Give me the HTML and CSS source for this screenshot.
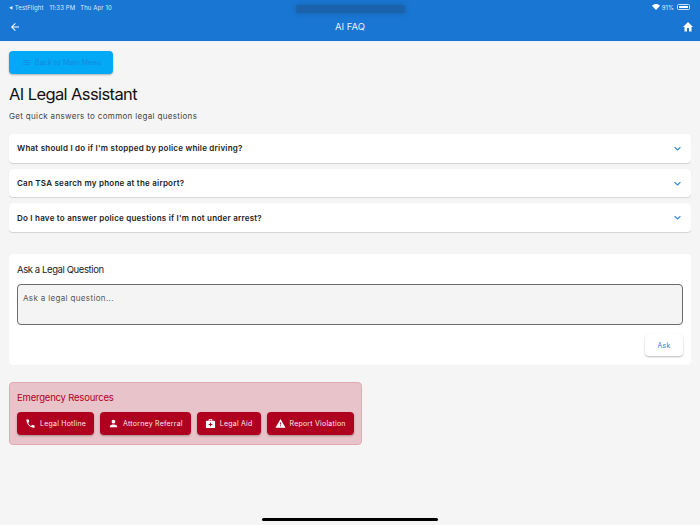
FILE: index.html
```html
<!DOCTYPE html>
<html lang="en">
<head>
<meta charset="utf-8">
<title>AI FAQ</title>
<link rel="stylesheet" href="styles.css">
</head>
<body>
<div class="app">
  <header class="appbar">
    <div class="status">
      <div class="status-left"><span class="tf-arrow">◀</span><span>TestFlight</span><span class="time">11:33 PM</span><span class="date">Thu Apr 10</span></div>
      <div class="status-right">
        <svg class="wifi" viewBox="0 0 16 12" width="8" height="6"><path fill="#fff" d="M8 12 0 3.600C4.500-1 11.500-1 16 3.600Z"/></svg>
        <span>91%</span>
        <span class="battery"><span class="battery-fill"></span></span>
      </div>
    </div>
    <div class="dynamic-pill"></div>
    <div class="nav">
      <svg class="nav-icon nav-icon-start" viewBox="0 0 24 24" width="12" height="12"><path fill="#fff" d="M20 11H7.800l5.600-5.600L12 4l-8 8 8 8 1.400-1.400L7.800 13H20z"/></svg>
      <div class="nav-title">AI FAQ</div>
      <svg class="nav-icon nav-icon-end" viewBox="0 0 24 24" width="12" height="12"><path fill="#fff" d="M10 21v-7h4v7h5v-9h3L12 2 2 12h3v9z"/></svg>
    </div>
  </header>
  <main class="content">
    <button class="back-btn">
      <svg viewBox="0 0 24 24" width="9" height="9"><path fill="#1a86e0" d="M3 18h18v-2H3zm0-5h18v-2H3zm0-7v2h18V6z"/></svg>
      <span>Back to Main Menu</span>
    </button>
    <h1 class="title">AI Legal Assistant</h1>
    <p class="subtitle">Get quick answers to common legal questions</p>
    <section class="faq">
      <div class="faq-item"><span>What should I do if I'm stopped by police while driving?</span><svg viewBox="0 0 12 8" width="7" height="5"><path fill="none" stroke="#2b85dc" stroke-width="2" d="m1 1.500 5 5 5-5"/></svg></div>
      <div class="faq-item"><span>Can TSA search my phone at the airport?</span><svg viewBox="0 0 12 8" width="7" height="5"><path fill="none" stroke="#2b85dc" stroke-width="2" d="m1 1.500 5 5 5-5"/></svg></div>
      <div class="faq-item"><span>Do I have to answer police questions if I'm not under arrest?</span><svg viewBox="0 0 12 8" width="7" height="5"><path fill="none" stroke="#2b85dc" stroke-width="2" d="m1 1.500 5 5 5-5"/></svg></div>
    </section>
    <section class="ask-card">
      <h2 class="ask-title">Ask a Legal Question</h2>
      <div class="ask-input">Ask a legal question...</div>
      <div class="ask-actions"><button class="ask-btn">Ask</button></div>
    </section>
    <section class="emergency">
      <h2 class="emergency-title">Emergency Resources</h2>
      <div class="emergency-row">
        <button class="em-btn"><svg viewBox="0 0 24 24" width="11" height="11"><path fill="#fff" d="M6.600 10.800c1.400 2.800 3.800 5.100 6.600 6.600l2.200-2.200c.3-.3.700-.4 1-.2 1.100.4 2.300.6 3.600.6.600 0 1 .4 1 1V20c0 .6-.4 1-1 1C10.600 21 3 13.400 3 4c0-.6.400-1 1-1h3.500c.6 0 1 .4 1 1 0 1.300.2 2.500.6 3.600.1.300 0 .7-.2 1z"/></svg><span>Legal Hotline</span></button>
        <button class="em-btn"><svg viewBox="0 0 24 24" width="11" height="11"><path fill="#fff" d="M12 12c2.200 0 4-1.800 4-4s-1.800-4-4-4-4 1.800-4 4 1.800 4 4 4m0 2c-2.700 0-8 1.300-8 4v2h16v-2c0-2.700-5.300-4-8-4"/></svg><span>Attorney Referral</span></button>
        <button class="em-btn"><svg viewBox="0 0 24 24" width="11" height="11"><path fill="#fff" d="M20 6h-4V4c0-1.100-.9-2-2-2h-4c-1.100 0-2 .9-2 2v2H4c-1.100 0-2 .9-2 2v12c0 1.100.9 2 2 2h16c1.100 0 2-.9 2-2V8c0-1.100-.9-2-2-2M10 4h4v2h-4zm6 11h-3v3h-2v-3H8v-2h3v-3h2v3h3z"/></svg><span>Legal Aid</span></button>
        <button class="em-btn"><svg viewBox="0 0 24 24" width="11" height="11"><path fill="#fff" d="M1 21h22L12 2zm12-3h-2v-2h2zm0-4h-2v-4h2z"/></svg><span>Report Violation</span></button>
      </div>
    </section>
  </main>
  <div class="home-indicator"></div>
</div>
</body>
</html>
```

FILE: styles.css
```css
* { box-sizing: border-box; }
html, body { margin: 0; padding: 0; }
body {
  width: 700px;
  height: 525px;
  overflow: hidden;
  background: #f5f5f5;
  font-family: Inter, "Liberation Sans", sans-serif;
}
.app { position: relative; width: 700px; height: 525px; }

.appbar {
  position: relative;
  height: 42px;
  background: #1976d2;
  border-bottom: 1px solid #eef3f9;
  color: #fff;
}
.status {
  height: 13px;
  padding: 1px 10px 0 9px;
  display: flex;
  justify-content: space-between;
  align-items: center;
  font-size: 6px;
  letter-spacing: 0.1px;
  color: #dfeaf7;
}
.status-left { display: flex; align-items: center; }
.tf-arrow { font-size: 4px; margin-right: 2px; }
.time { margin-left: 6px; }
.date { margin-left: 5px; }
.status-right { display: flex; align-items: center; gap: 2px; padding-right: 0; }
.battery {
  display: flex;
  width: 13px;
  height: 6px;
  padding: 1px;
  margin-left: 1px;
  border: 0.5px solid #cfe0f3;
  border-radius: 1.500px;
}
.battery-fill { width: 10px; background: #fff; border-radius: 0.500px; }
.dynamic-pill {
  position: absolute;
  left: 296px;
  top: 5px;
  width: 109px;
  height: 8px;
  border-radius: 3px;
  background: #1a62ab;
  box-shadow: 0 0 4px 1px rgba(26, 98, 171, 0.7);
}
.nav {
  height: 28px;
  padding: 0 6px;
  display: grid;
  grid-template-columns: 1fr auto 1fr;
  align-items: center;
}
.nav-icon-start { margin-left: 3px; }
.nav-icon-end { justify-self: end; }
.nav-title {
  font-size: 9.500px;
  line-height: 28px;
  color: #e6f0fa;
}

.content { padding: 9px 9px 0 9px; display: flex; flex-direction: column; align-items: stretch; }

.back-btn {
  width: 104px;
  height: 23px;
  padding: 0 0 0 13px;
  display: flex;
  align-items: center;
  gap: 4px;
  border: 0;
  border-radius: 4px;
  background: #03a9f4;
  box-shadow: 0 1px 2px rgba(0, 0, 0, 0.3);
  color: #1a86e0;
  font-family: inherit;
  font-size: 7px;
  letter-spacing: 0.15px;
}
.title {
  margin: 10px 0 0;
  font-size: 16.500px;
  line-height: 20px;
  font-weight: 400;
  letter-spacing: -0.6px;
  color: #111;
}
.subtitle {
  margin: 7px 0 0;
  font-size: 8px;
  line-height: 10px;
  letter-spacing: 0.33px;
  color: #444;
}

.faq { margin-top: 13px; display: flex; flex-direction: column; gap: 6px; }
.faq-item {
  height: 28.700px;
  padding: 0 10px 0 8px;
  display: flex;
  align-items: center;
  justify-content: space-between;
  background: #fff;
  border-radius: 4px;
  box-shadow: 0 1px 1px rgba(0, 0, 0, 0.14);
  font-size: 8px;
  font-weight: 600;
  letter-spacing: 0.23px;
  color: #222;
}

.ask-card {
  margin-top: 22px;
  height: 111px;
  padding: 10px 8px 0;
  background: #fff;
  border-radius: 4px;
}
.ask-title {
  margin: 0;
  font-size: 9.500px;
  line-height: 12px;
  font-weight: 400;
  letter-spacing: -0.4px;
  color: #222;
}
.ask-input {
  margin-top: 8px;
  height: 41px;
  padding: 8px 5px 0;
  background: #f4f4f4;
  border: 1px solid #6b6b6b;
  border-radius: 4px;
  font-size: 8px;
  line-height: 10px;
  letter-spacing: 0.35px;
  color: #555;
}
.ask-actions { margin-top: 9px; display: flex; justify-content: flex-end; }
.ask-btn {
  width: 38px;
  height: 22px;
  padding: 0;
  border: 0;
  border-radius: 4px;
  background: #fff;
  box-shadow: 0 1px 2px rgba(0, 0, 0, 0.28);
  color: #2b7fd6;
  font-family: inherit;
  font-size: 7px;
  letter-spacing: 0.2px;
}

.emergency {
  margin-top: 17px;
  width: 353px;
  height: 63px;
  padding: 9px 7px 0;
  background: #e8c4ca;
  border: 1px solid #e0a9b3;
  border-radius: 4px;
}
.emergency-title {
  margin: 0;
  font-size: 9.500px;
  line-height: 12px;
  font-weight: 400;
  letter-spacing: -0.2px;
  color: #b00020;
}
.emergency-row { margin-top: 8px; display: flex; gap: 6px; }
.em-btn {
  height: 23px;
  padding: 0 8px;
  display: flex;
  align-items: center;
  gap: 4px;
  border: 0;
  border-radius: 4px;
  background: #b00020;
  box-shadow: 0 1px 2px rgba(0, 0, 0, 0.3);
  color: #f7e8eb;
  font-family: inherit;
  font-size: 7px;
  letter-spacing: 0.22px;
  white-space: nowrap;
}

.home-indicator {
  position: absolute;
  left: 262px;
  bottom: 4px;
  width: 176px;
  height: 3px;
  border-radius: 2px;
  background: #000;
}
```
